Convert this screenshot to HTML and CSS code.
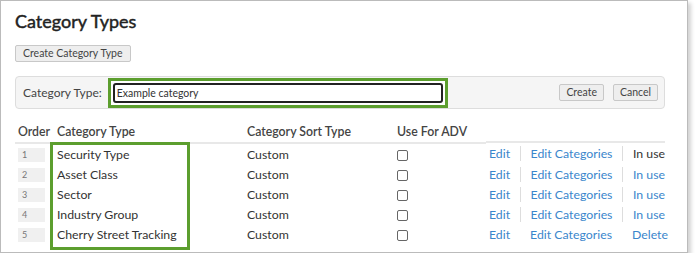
FILE: index.html
```html
<!DOCTYPE html>
<html lang="en">
<head>
  <meta charset="UTF-8">
  <title>Category Types</title>
  <link rel="stylesheet" href="styles.css">
</head>
<body>
  <div class="frame">
    <h1 class="page-title">Category Types</h1>
    <button class="btn btn-new">Create Category Type</button>

    <div class="create-panel">
      <label class="create-label" for="cat-name">Category Type:</label>
      <div class="highlight">
        <input type="text" class="create-input" id="cat-name" value="Example category">
      </div>
      <div class="panel-actions">
        <button class="btn">Create</button>
        <button class="btn">Cancel</button>
      </div>
    </div>

    <div class="table-wrap">
      <table class="types-table">
        <thead>
          <tr>
            <th class="col-order">Order</th>
            <th class="col-name">Category Type</th>
            <th class="col-sort">Category Sort Type</th>
            <th class="col-adv">Use For ADV</th>
            <th class="col-actions"></th>
          </tr>
        </thead>
        <tbody>
          <tr>
            <td class="col-order"><span class="order-box">1</span></td>
            <td class="col-name">Security Type</td>
            <td class="col-sort">Custom</td>
            <td class="col-adv"><span class="check"></span></td>
            <td class="col-actions"><a class="link">Edit</a><span class="sep"></span><a class="link">Edit Categories</a><span class="sep"></span><span class="in-use">In use</span></td>
          </tr>
          <tr>
            <td class="col-order"><span class="order-box">2</span></td>
            <td class="col-name">Asset Class</td>
            <td class="col-sort">Custom</td>
            <td class="col-adv"><span class="check"></span></td>
            <td class="col-actions"><a class="link">Edit</a><span class="sep"></span><a class="link">Edit Categories</a><span class="sep"></span><a class="link">In use</a></td>
          </tr>
          <tr>
            <td class="col-order"><span class="order-box">3</span></td>
            <td class="col-name">Sector</td>
            <td class="col-sort">Custom</td>
            <td class="col-adv"><span class="check"></span></td>
            <td class="col-actions"><a class="link">Edit</a><span class="sep"></span><a class="link">Edit Categories</a><span class="sep"></span><a class="link">In use</a></td>
          </tr>
          <tr>
            <td class="col-order"><span class="order-box">4</span></td>
            <td class="col-name">Industry Group</td>
            <td class="col-sort">Custom</td>
            <td class="col-adv"><span class="check"></span></td>
            <td class="col-actions"><a class="link">Edit</a><span class="sep"></span><a class="link">Edit Categories</a><span class="sep"></span><a class="link">In use</a></td>
          </tr>
          <tr>
            <td class="col-order"><span class="order-box">5</span></td>
            <td class="col-name">Cherry Street Tracking</td>
            <td class="col-sort">Custom</td>
            <td class="col-adv"><span class="check"></span></td>
            <td class="col-actions"><a class="link">Edit</a><span class="sep"></span><a class="link">Edit Categories</a><span class="sep"></span><a class="link">Delete</a></td>
          </tr>
        </tbody>
      </table>
      <!-- annotation box over the name column -->
      <div class="name-highlight"></div>
    </div>
  </div>
</body>
</html>
```

FILE: styles.css
```css
body, html {
  margin: 0;
  padding: 0;
  background: #fff;
  font-family: Lato, 'Open Sans', sans-serif;
  color: #333;
}
.frame {
  box-sizing: border-box;
  width: 688px;
  height: 253px;
  border: 1px solid #bbb;
  box-shadow: 3px 3px 4px rgba(0,0,0,0.18);
  padding: 8px 14px 0 14px;
}
.page-title {
  margin: 0;
  font-size: 18px;
  line-height: 24px;
  font-weight: 400;
  -webkit-text-stroke: 0.45px #222;
  color: #222;
}
.btn {
  font-family: Lato, sans-serif;
  font-size: 10.5px;
  color: #444;
  background: #eee;
  border: 1px solid #c8c8c8;
  border-radius: 2px;
  padding: 0 6px;
  height: 17px;
  line-height: 15px;
}
.btn-new {
  display: block;
  margin-top: 12px;
  padding: 0 7px;
}
.create-panel {
  margin-top: 14px;
  display: flex;
  align-items: center;
  width: 650px;
  height: 33px;
  box-sizing: border-box;
  background: #f5f5f5;
  border: 1px solid #ddd;
  border-radius: 4px;
  padding: 0 6px 0 7px;
}
.create-label {
  font-size: 12px;
  color: #444;
  margin-right: 6px;
}
.highlight {
  border: 3px solid #5c9e2e;
  padding: 2px;
  background: #fff;
}
.create-input {
  display: block;
  box-sizing: border-box;
  width: 330px;
  height: 20px;
  border: 2px solid #222;
  border-radius: 3px;
  padding: 0 2px;
  font-family: Lato, sans-serif;
  font-size: 10.5px;
  color: #333;
  outline: none;
}
.panel-actions {
  margin-left: auto;
  display: flex;
  gap: 9px;
}
.table-wrap {
  position: relative;
  margin-top: 12px;
}
.types-table {
  width: 650px;
  border-collapse: collapse;
  table-layout: fixed;
  font-size: 12.3px;
}
.types-table th {
  text-align: left;
  font-weight: 600;
  color: #444;
  height: 20px;
  padding: 0 0 0 3px;
  border-bottom: 2px solid #e8e8e8;
}
.types-table td {
  height: 20px;
  padding: 0 0 0 3px;
  white-space: nowrap;
}
.col-order { width: 36px; }
.col-name { width: 187px; }
.col-sort { width: 147px; }
.col-adv { width: 89px; }
.order-box {
  display: inline-block;
  width: 23px;
  height: 14px;
  line-height: 14px;
  padding-left: 4px;
  background: #f0f0f0;
  color: #777;
  font-size: 9px;
  vertical-align: middle;
}
.check {
  display: inline-block;
  width: 9px;
  height: 9px;
  border: 1px solid #666;
  border-radius: 2px;
  vertical-align: middle;
  background: #fff;
}
.col-actions {
  display: flex;
  align-items: center;
}
.link {
  color: #3a86cc;
  cursor: pointer;
}
.in-use {
  color: #333;
}
.sep {
  display: inline-block;
  width: 1px;
  height: 15px;
  background: #ddd;
  margin: 0 10px 0 10px;
}
.name-highlight {
  position: absolute;
  left: 35px;
  top: 21px;
  width: 134px;
  height: 102px;
  border: 3px solid #5c9e2e;
}
```
